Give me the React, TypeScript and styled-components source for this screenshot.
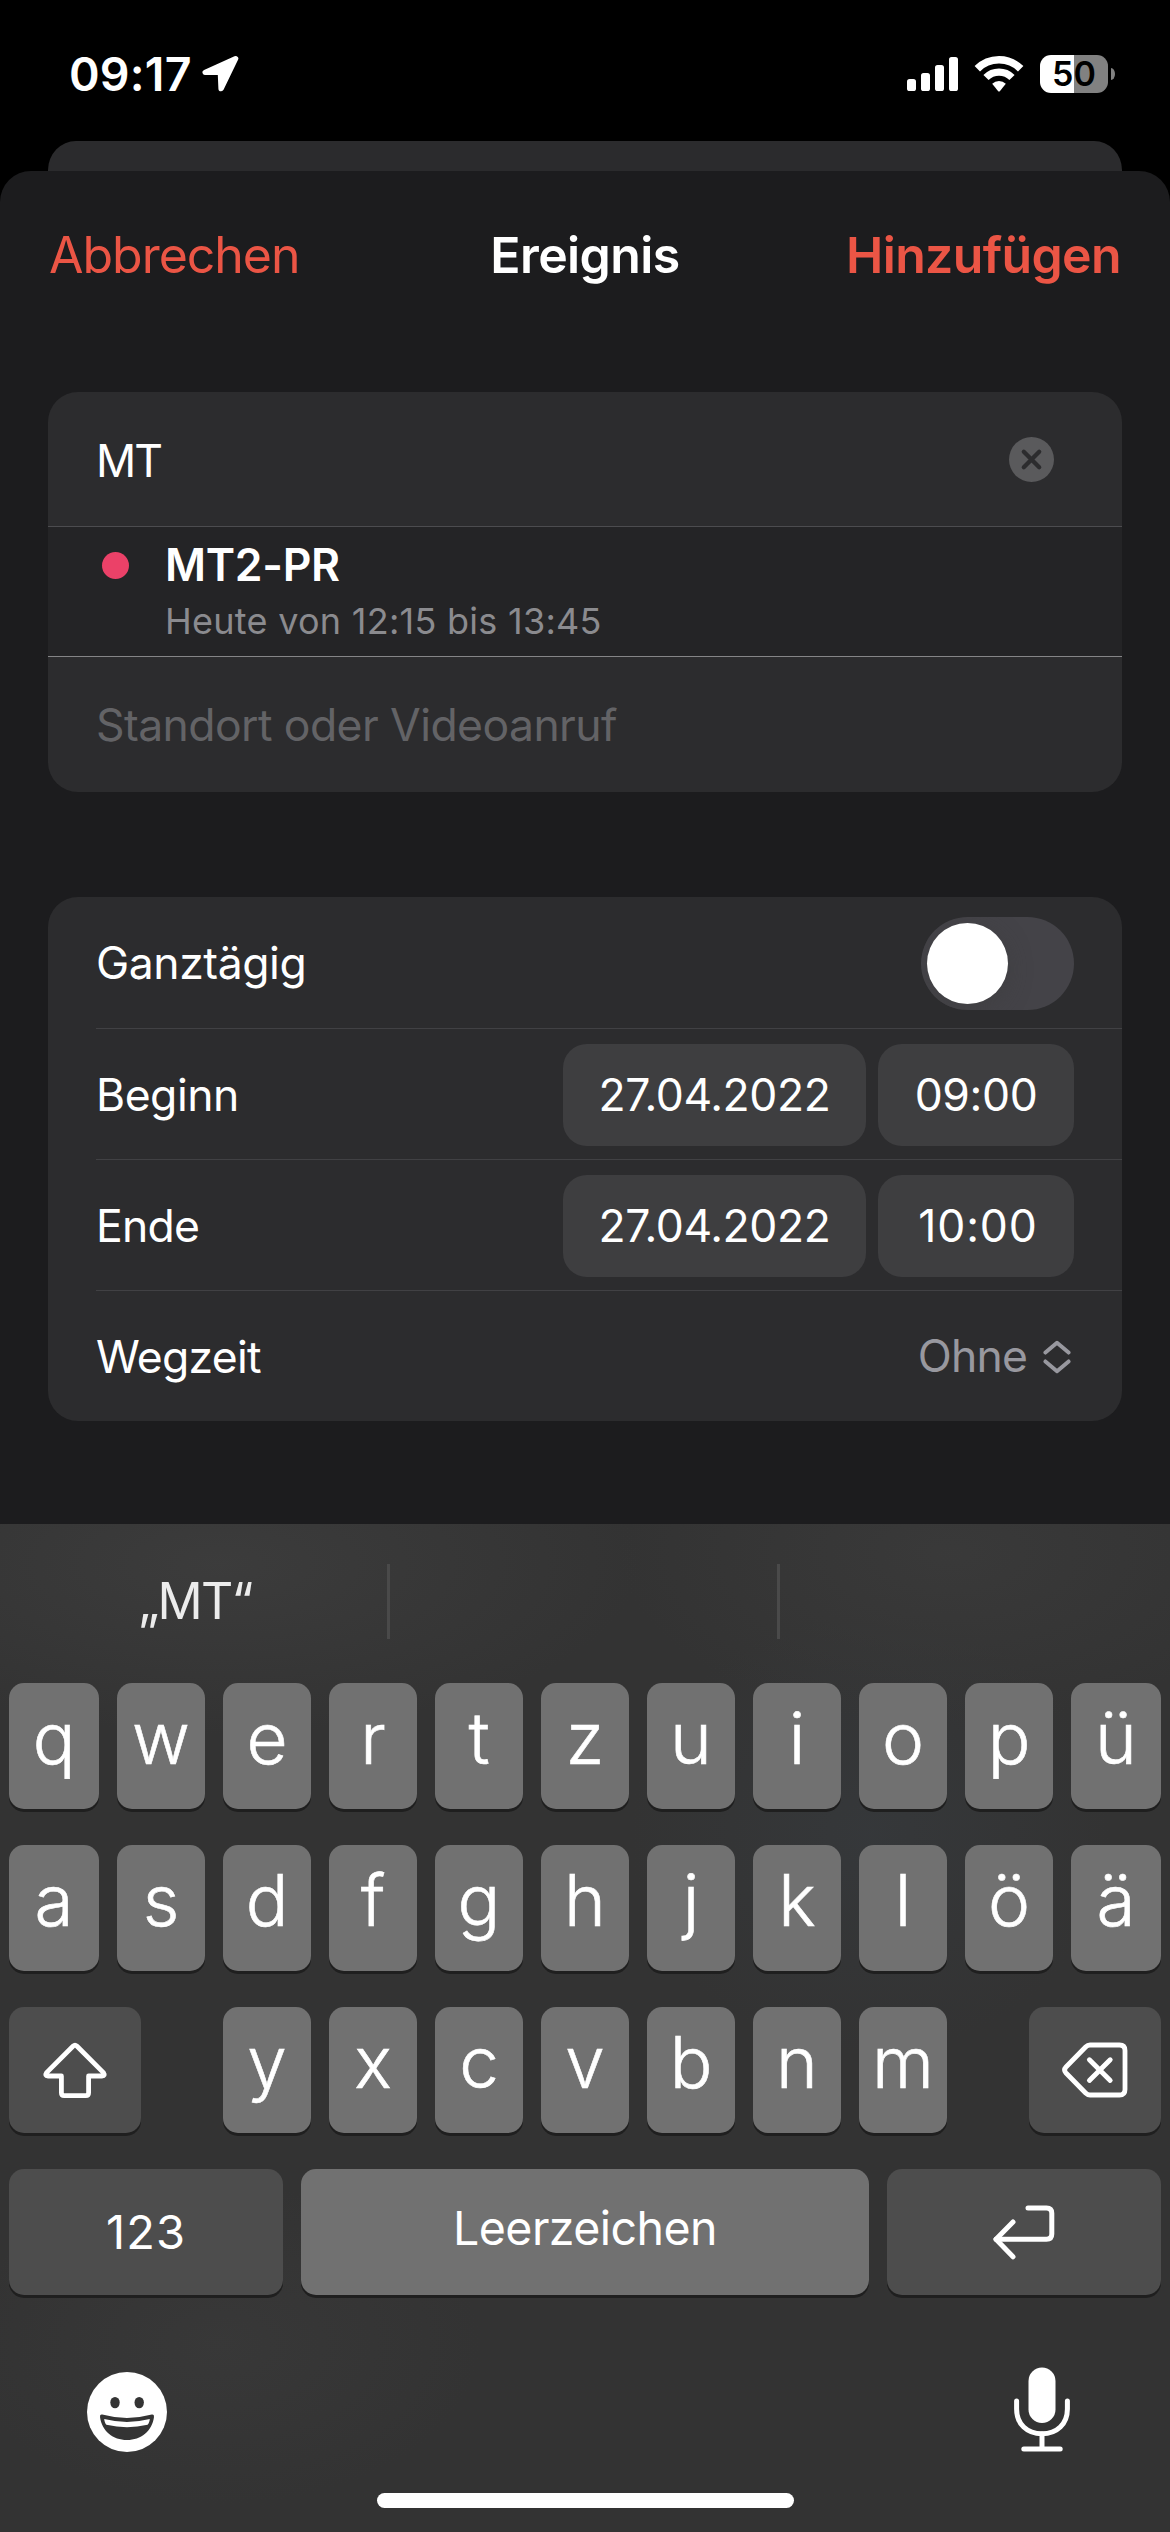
import React from 'react';
import styled, { createGlobalStyle } from 'styled-components';

const GlobalStyle = createGlobalStyle`
  *, *::before, *::after { box-sizing: border-box; }
  body {
    margin: 0;
    background: #000;
    color: #fff;
    font-family: Inter, 'Liberation Sans', sans-serif;
  }
  svg { display: block; flex: none; }
`;

const Screen = styled.main`
  display: flex;
  flex-direction: column;
  width: 1170px;
  height: 2532px;
  overflow: hidden;
  background: #000;
`;

const Label = styled.span<{ $size: number; $weight?: number; $track?: number; $color?: string }>`
  font-size: ${(p) => p.$size}px;
  font-weight: ${(p) => p.$weight ?? 400};
  letter-spacing: ${(p) => p.$track ?? 0}px;
  color: ${(p) => p.$color ?? '#fff'};
  line-height: 1.2;
  white-space: nowrap;
`;

/* Status bar */

const StatusBar = styled.header`
  display: flex;
  justify-content: space-between;
  height: 141px;
  flex: none;
  padding: 39px 55px 0 69px;
`;

const StatusGroup = styled.div<{ $gap: number }>`
  display: flex;
  align-items: center;
  gap: ${(p) => p.$gap}px;
  height: 70px;
  & > span { padding-top: 2px; }
`;

const BatteryWrap = styled.div`
  display: flex;
  align-items: center;
  gap: 3px;
`;

const BatteryBody = styled.div`
  display: flex;
  align-items: center;
  justify-content: center;
  width: 68px;
  height: 38px;
  border-radius: 11px;
  background: linear-gradient(to right, #fff 50%, #818181 50%);
`;

const BatteryNub = styled.div`
  width: 4px;
  height: 12px;
  border-radius: 0 4px 4px 0 / 0 6px 6px 0;
  background: #818181;
`;

/* Sheet */

const BackSheet = styled.div`
  flex: none;
  height: 30px;
  margin: 0 48px;
  border-radius: 28px 28px 0 0 / 29px 29px 0 0;
  background: #2b2b2d;
`;

const Sheet = styled.section`
  flex: none;
  height: 1353px;
  padding: 0 48px;
  border-radius: 31px 31px 0 0;
  background: #1c1c1e;
`;

const NavBar = styled.div`
  display: grid;
  grid-template-columns: 1fr auto 1fr;
  align-items: center;
  height: 168px;
  margin-bottom: 53px;
`;

const NavButton = styled.button<{ $end?: boolean }>`
  display: flex;
  justify-content: ${(p) => (p.$end ? 'flex-end' : 'flex-start')};
  padding: 0 1px;
  border: 0;
  background: none;
  font-family: inherit;
`;

const Card = styled.div`
  border-radius: 30px;
  overflow: hidden;
  background: #2c2c2e;
  & + & { margin-top: 105px; }
`;

const FieldRow = styled.div<{ $height: number; $nudge: number }>`
  display: flex;
  align-items: center;
  justify-content: space-between;
  height: ${(p) => p.$height}px;
  padding: 0 68px 0 48px;
  & > span { padding-top: ${(p) => p.$nudge}px; }
`;

const Suggestion = styled.div`
  display: grid;
  grid-template-columns: 27px 1fr;
  column-gap: 36px;
  height: 131px;
  padding: 12px 0 0 54px;
  align-content: start;
  align-items: center;
  border-top: 1px solid #4c4c4f;
  border-bottom: 1px solid #858587;
  background: #242426;
`;

const Dot = styled.div`
  width: 27px;
  height: 27px;
  border-radius: 50%;
  background: #eb4168;
`;

const Subtitle = styled.div`
  grid-column: 2;
  display: flex;
  padding-top: 8px;
`;

const SettingRow = styled.div<{ $divided?: boolean }>`
  display: flex;
  align-items: center;
  justify-content: space-between;
  height: 131px;
  margin-left: 48px;
  padding-right: 48px;
  border-top: ${(p) => (p.$divided ? '1px solid #414144' : '0')};
  & > span { padding-top: 3px; }
`;

const Toggle = styled.div`
  display: flex;
  align-items: center;
  width: 153px;
  height: 93px;
  margin-top: 2px;
  padding: 0 6px;
  border-radius: 47px;
  overflow: hidden;
  background: #444348;
`;

const Knob = styled.div`
  width: 81px;
  height: 81px;
  border-radius: 50%;
  background: #fff;
  box-shadow: 0 6px 22px rgba(60, 60, 60, 0.5);
`;

const Pills = styled.div`
  display: flex;
  gap: 12px;
  padding-top: 1px;
`;

const Pill = styled.div<{ $width: number; $indent?: number }>`
  display: flex;
  align-items: center;
  justify-content: center;
  width: ${(p) => p.$width}px;
  height: 102px;
  padding: 2px 0 0 ${(p) => p.$indent ?? 0}px;
  border-radius: 24px;
  background: #3e3e40;
`;

const MenuValue = styled.div`
  display: flex;
  align-items: center;
  gap: 16px;
  padding: 2px 3px 0 0;
`;

/* Keyboard */

const Keyboard = styled.section`
  display: flex;
  flex-direction: column;
  flex: 1;
  padding: 0 9px;
  background:
    radial-gradient(ellipse 420px 170px at 220px 40px, rgba(62, 62, 62, 0.8), rgba(62, 62, 62, 0)),
    radial-gradient(ellipse 330px 170px at 950px 30px, rgba(60, 60, 60, 0.7), rgba(60, 60, 60, 0)),
    radial-gradient(ellipse 240px 220px at 870px 310px, rgba(54, 57, 60, 0.8), rgba(54, 57, 60, 0)),
    radial-gradient(ellipse 260px 160px at 220px 820px, rgba(58, 58, 58, 0.7), rgba(58, 58, 58, 0)),
    #333;
`;

const Predictions = styled.div`
  display: grid;
  grid-template-columns: 378px 390px 1fr;
  align-items: center;
  height: 154px;
  margin: 0 0 5px;
`;

const Prediction = styled.div<{ $divided?: boolean }>`
  display: flex;
  align-items: center;
  justify-content: center;
  height: 75px;
  padding-right: 6px;
  border-left: ${(p) => (p.$divided ? '3px solid #4a4a4a' : '0')};
`;

const KeyRow = styled.div<{ $columns: string }>`
  display: grid;
  grid-template-columns: ${(p) => p.$columns};
  column-gap: 18px;
  height: 126px;
  margin-bottom: 36px;
`;

const Key = styled.button<{ $dark?: boolean; $lift?: number }>`
  display: flex;
  align-items: center;
  justify-content: center;
  min-width: 0;
  padding: 0 0 ${(p) => p.$lift ?? 0}px;
  border: 0;
  border-radius: 15px;
  background: ${(p) => (p.$dark ? '#4d4d4d' : '#717171')};
  box-shadow: 0 3px 0 #1f1f1f;
  font-family: inherit;
`;

const Glyph = styled(Label)`
  -webkit-text-stroke: 0.6px #fff;
`;

const Spacer = styled.span``;

const Dock = styled.div`
  display: flex;
  justify-content: space-between;
  align-items: flex-start;
  padding: 36px 91px 0 78px;
  height: 162px;
`;

const EmojiButton = styled.div`
  padding-top: 5px;
`;

const HomeIndicator = styled.div`
  width: 417px;
  height: 15px;
  margin: 0 auto;
  border-radius: 8px;
  background: #fff;
`;

const LocationArrow = () => (
  <svg width="38" height="38" viewBox="0 0 38 38">
    <path
      d="M34.6 3.6 L4.2 17.4 H19.4 L20.1 33.6 Z"
      fill="#fff"
      stroke="#fff"
      strokeWidth="5.4"
      strokeLinejoin="round"
    />
  </svg>
);

const SignalBars = () => (
  <svg width="51" height="34" viewBox="0 0 51 34" fill="#fff">
    <rect x="0" y="22" width="9" height="12" rx="2.6" />
    <rect x="14" y="16" width="9" height="18" rx="2.6" />
    <rect x="28" y="8" width="9" height="26" rx="2.6" />
    <rect x="42" y="0" width="9" height="34" rx="2.6" />
  </svg>
);

const Wifi = () => (
  <svg width="50" height="37" viewBox="0 0 50 37" fill="none" stroke="#fff">
    <path d="M3.3 12.8 A30.7 30.7 0 0 1 46.7 12.8" strokeWidth="7.6" />
    <path d="M12 21.5 A18.4 18.4 0 0 1 38 21.5" strokeWidth="7.3" />
    <path d="M18.2 27.7 A9.6 9.6 0 0 1 31.8 27.7 L25.8 35.2 Q25 36 24.2 35.2 Z" fill="#fff" stroke="none" />
  </svg>
);

const ClearIcon = () => (
  <svg width="45" height="45" viewBox="0 0 45 45">
    <circle cx="22.5" cy="22.5" r="22.5" fill="#5a5a5c" />
    <path d="M14.8 14.8 L30.2 30.2 M30.2 14.8 L14.8 30.2" stroke="#2c2c2e" strokeWidth="4.3" strokeLinecap="round" />
  </svg>
);

const UpDown = () => (
  <svg width="28" height="34" viewBox="0 0 28 34" fill="none" stroke="#98989f" strokeWidth="3.9" strokeLinecap="round" strokeLinejoin="round">
    <path d="M2.4 12.6 L14 2.8 L25.6 12.6" />
    <path d="M2.4 21.4 L14 31.2 L25.6 21.4" />
  </svg>
);

const ShiftIcon = () => (
  <svg width="66" height="58" viewBox="0 0 66 58" fill="none" stroke="#fff" strokeWidth="4.8" strokeLinejoin="round">
    <path d="M31.2 5 L4.6 31.6 Q2.4 35 6 35 H19.4 V51.8 Q19.4 54.6 22.2 54.6 H43.8 Q46.6 54.6 46.6 51.8 V35 H60 Q63.6 35 61.4 31.6 L34.8 5 Q33 3.4 31.2 5 Z" />
  </svg>
);

const BackspaceIcon = () => (
  <svg width="66" height="56" viewBox="0 0 66 56" fill="none" stroke="#fff" strokeWidth="4.8" strokeLinecap="round" strokeLinejoin="round">
    <path d="M28 3 H57.5 Q63 3 63 8.5 V47.5 Q63 53 57.5 53 H28 Q25.6 53 23.6 51 L4 31 Q1.2 28 4 25 L23.6 5 Q25.6 3 28 3 Z" />
    <path d="M27.4 17.8 L48.2 38.4 M48.2 17.8 L27.4 38.4" strokeWidth="4.9" />
  </svg>
);

const ReturnIcon = () => (
  <svg width="64" height="56" viewBox="0 0 64 56" fill="none" stroke="#fff" strokeWidth="5" strokeLinecap="round" strokeLinejoin="round">
    <path d="M36 4 H54.5 Q59.8 4 59.8 9.3 V30 Q59.8 35.3 54.5 35.3 H4" />
    <path d="M21 18 L4 35.3 L21 52.8" />
  </svg>
);

const EmojiIcon = () => (
  <svg width="80" height="80" viewBox="0 0 80 80">
    <circle cx="40" cy="40" r="40" fill="#fff" />
    <ellipse cx="28" cy="30.6" rx="4.7" ry="5.7" fill="#343434" />
    <ellipse cx="52.2" cy="30.6" rx="4.7" ry="5.7" fill="#343434" />
    <path
      d="M15.2 42.6 Q40 49.4 64.8 42.6 Q67.3 42.2 67 45 C65.2 59 54 68 40 68 C26 68 14.8 59 13 45 Q12.7 42.2 15.2 42.6 Z"
      fill="#343434"
    />
    <path d="M17.2 47 Q40 52.8 62.8 47 C62.6 49.4 61.8 51.4 60.6 52.8 Q40 57.6 19.4 52.8 C18.2 51.4 17.4 49.4 17.2 47 Z" fill="#fff" />
  </svg>
);

const MicIcon = () => (
  <svg width="56" height="86" viewBox="0 0 56 86" fill="none" stroke="#fff" strokeWidth="5" strokeLinecap="round">
    <rect x="14.5" y="0.5" width="27" height="55.5" rx="13.5" fill="#fff" stroke="none" />
    <path d="M2.6 34 V42 C2.6 57 13 66.8 28 66.8 C43 66.8 53.4 57 53.4 42 V34" />
    <path d="M28 67 V81.5 M9.8 82 H46.2" />
  </svg>
);

const topRow = ['q', 'w', 'e', 'r', 't', 'z', 'u', 'i', 'o', 'p', 'ü'];
const homeRow = ['a', 's', 'd', 'f', 'g', 'h', 'j', 'k', 'l', 'ö', 'ä'];
const bottomRow = ['y', 'x', 'c', 'v', 'b', 'n', 'm'];
const letterColumns = '90px repeat(9, 88px) 90px';

const LetterKey = ({ letter }: { letter: string }) => (
  <Key $lift={15}>
    <Glyph $size={71} $weight={300}>{letter}</Glyph>
  </Key>
);

type DateRowProps = {
  label: string;
  track: number;
  date: string;
  time: string;
  timeTrack: number;
  timeIndent?: number;
};

const DateRow = ({ label, track, date, time, timeTrack, timeIndent }: DateRowProps) => (
  <SettingRow $divided>
    <Label $size={44.5} $track={track}>{label}</Label>
    <Pills>
      <Pill $width={303}><Label $size={44.5} $track={-0.43}>{date}</Label></Pill>
      <Pill $width={196} $indent={timeIndent}><Label $size={44.5} $track={timeTrack}>{time}</Label></Pill>
    </Pills>
  </SettingRow>
);

export default function App() {
  return (
    <>
      <GlobalStyle />
      <Screen>
        <StatusBar>
          <StatusGroup $gap={9.5}>
            <Label $size={46.5} $weight={600} $track={0.2}>09:17</Label>
            <LocationArrow />
          </StatusGroup>
          <StatusGroup $gap={16}>
            <SignalBars />
            <Wifi />
            <BatteryWrap>
              <BatteryBody><Label $size={34} $weight={600} $color="#000">50</Label></BatteryBody>
              <BatteryNub />
            </BatteryWrap>
          </StatusGroup>
        </StatusBar>

        <BackSheet />
        <Sheet>
          <NavBar>
            <NavButton><Label $size={50} $track={-1.02} $color="#eb5545">Abbrechen</Label></NavButton>
            <Label $size={50} $weight={600} $track={-0.58}>Ereignis</Label>
            <NavButton $end><Label $size={50} $weight={600} $track={-0.64} $color="#eb5545">Hinzufügen</Label></NavButton>
          </NavBar>

          <Card>
            <FieldRow $height={134} $nudge={6}>
              <Label $size={44.5} $track={-2}>MT</Label>
              <ClearIcon />
            </FieldRow>
            <Suggestion>
              <Dot />
              <Label $size={44.5} $weight={600} $track={-0.3}>MT2-PR</Label>
              <Subtitle><Label $size={36} $track={0.27} $color="#8b8b8f">Heute von 12:15 bis 13:45</Label></Subtitle>
            </Suggestion>
            <FieldRow $height={135} $nudge={2}>
              <Label $size={44.5} $track={-0.58} $color="#636366">Standort oder Videoanruf</Label>
            </FieldRow>
          </Card>

          <Card>
            <SettingRow>
              <Label $size={44.5} $track={-0.43}>Ganztägig</Label>
              <Toggle><Knob /></Toggle>
            </SettingRow>
            <DateRow label="Beginn" track={-0.48} date="27.04.2022" time="09:00" timeTrack={-0.4} />
            <DateRow label="Ende" track={-0.76} date="27.04.2022" time="10:00" timeTrack={0.9} timeIndent={4} />
            <SettingRow $divided>
              <Label $size={44.5} $track={-0.75}>Wegzeit</Label>
              <MenuValue>
                <Label $size={44.5} $track={-0.86} $color="#98989f">Ohne</Label>
                <UpDown />
              </MenuValue>
            </SettingRow>
          </Card>
        </Sheet>

        <Keyboard>
          <Predictions>
            <Prediction><Label $size={50} $track={-1.7} $color="#ececec">„MT“</Label></Prediction>
            <Prediction $divided />
            <Prediction $divided />
          </Predictions>
          <KeyRow $columns={letterColumns}>
            {topRow.map((l) => <LetterKey key={l} letter={l} />)}
          </KeyRow>
          <KeyRow $columns={letterColumns}>
            {homeRow.map((l) => <LetterKey key={l} letter={l} />)}
          </KeyRow>
          <KeyRow $columns="132px 46px repeat(7, 88px) 46px 132px">
            <Key $dark><ShiftIcon /></Key>
            <Spacer />
            {bottomRow.map((l) => <LetterKey key={l} letter={l} />)}
            <Spacer />
            <Key $dark><BackspaceIcon /></Key>
          </KeyRow>
          <KeyRow $columns="274px 568px 274px">
            <Key $dark><Label $size={47} $track={1.1}>123</Label></Key>
            <Key $lift={7}><Label $size={46.5} $track={-0.56}>Leerzeichen</Label></Key>
            <Key $dark><ReturnIcon /></Key>
          </KeyRow>
          <Dock>
            <EmojiButton><EmojiIcon /></EmojiButton>
            <MicIcon />
          </Dock>
          <HomeIndicator />
        </Keyboard>
      </Screen>
    </>
  );
}
